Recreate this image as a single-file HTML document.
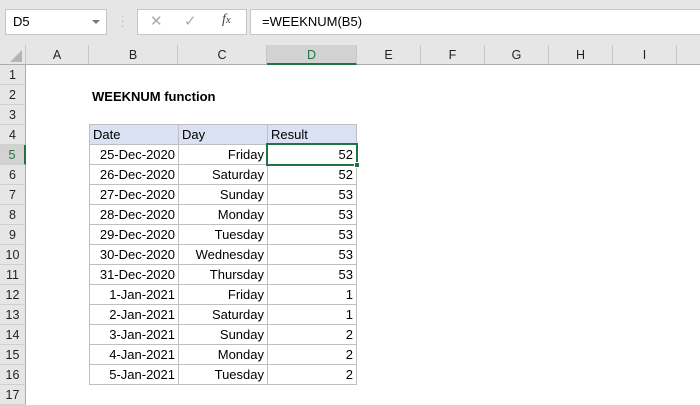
<!DOCTYPE html>
<html><head><style>
*{margin:0;padding:0;box-sizing:border-box}
body{width:700px;height:400px;overflow:hidden;background:#fff;font-family:"Liberation Sans",sans-serif;position:relative;color:#000}
.a{position:absolute}
.ch{position:absolute;top:45px;height:20px;background:#e6e6e6;border-right:1px solid #c8c8c8;border-bottom:1px solid #ababab;font-size:12.5px;text-align:center;line-height:20px;color:#222}
.rh{position:absolute;left:0;width:26px;height:20px;background:#e6e6e6;border-bottom:1px solid #d0d0d0;border-right:1px solid #ababab;font-size:12.5px;text-align:center;line-height:20px;color:#222}
.c{position:absolute;height:21px;border:1px solid #bfbfbf;font-size:13px;line-height:19px;padding:0 3px;white-space:nowrap}
.r{text-align:right}
</style></head><body>
<div class="a" style="left:0;top:0;width:700px;height:45px;background:#e6e6e6"></div>
<div class="a" style="left:5px;top:9px;width:102px;height:26px;background:#fff;border:1px solid #c6c6c6;font-size:13px;line-height:24px;padding-left:7px">D5</div>
<div class="a" style="left:92px;top:20px;width:0;height:0;border-left:4px solid transparent;border-right:4px solid transparent;border-top:4px solid #777"></div>
<div class="a" style="left:121px;top:14px;color:#aaa;font-size:10px;line-height:5px">·<br>·<br>·</div>
<div class="a" style="left:137px;top:9px;width:110px;height:26px;background:#fff;border:1px solid #c6c6c6"></div>
<div class="a" style="left:150px;top:12px;color:#aaa;font-size:15px">✕</div>
<div class="a" style="left:184px;top:12px;color:#aaa;font-size:15px">✓</div>
<div class="a" style="left:222px;top:12px;color:#444;font-size:14px;font-style:italic;font-family:'Liberation Serif',serif">f<span style="font-size:11px">x</span></div>
<div class="a" style="left:250px;top:9px;width:450px;height:26px;background:#fff;border:1px solid #c6c6c6;border-right:none;font-size:13px;line-height:24px;padding-left:11px">=WEEKNUM(B5)</div>

<div class="ch" style="left:0;width:26px"></div>
<div class="a" style="left:10px;top:50px;width:0;height:0;border-left:12px solid transparent;border-bottom:12px solid #b4b4b4"></div>
<div class="ch" style="left:26px;width:63px">A</div>
<div class="ch" style="left:89px;width:89px">B</div>
<div class="ch" style="left:178px;width:89px">C</div>
<div class="ch" style="left:267px;width:90px;background:#d2d2d2;border-bottom:2px solid #217346;color:#217346">D</div>
<div class="ch" style="left:357px;width:64px">E</div>
<div class="ch" style="left:421px;width:64px">F</div>
<div class="ch" style="left:485px;width:64px">G</div>
<div class="ch" style="left:549px;width:64px">H</div>
<div class="ch" style="left:613px;width:64px">I</div>
<div class="ch" style="left:677px;width:30px"></div>

<div class="rh" style="top:65px">1</div>
<div class="rh" style="top:85px">2</div>
<div class="rh" style="top:105px">3</div>
<div class="rh" style="top:125px">4</div>
<div class="rh" style="top:145px;background:#d2d2d2;border-right:2px solid #217346;color:#217346">5</div>
<div class="rh" style="top:165px">6</div>
<div class="rh" style="top:185px">7</div>
<div class="rh" style="top:205px">8</div>
<div class="rh" style="top:225px">9</div>
<div class="rh" style="top:245px">10</div>
<div class="rh" style="top:265px">11</div>
<div class="rh" style="top:285px">12</div>
<div class="rh" style="top:305px">13</div>
<div class="rh" style="top:325px">14</div>
<div class="rh" style="top:345px">15</div>
<div class="rh" style="top:365px">16</div>
<div class="rh" style="top:385px">17</div>

<div class="a" style="left:92px;top:87px;font-size:13px;font-weight:bold;line-height:20px">WEEKNUM function</div>

<div class="c" style="left:89px;top:124px;width:90px;background:#d9e1f2">Date</div>
<div class="c" style="left:178px;top:124px;width:90px;background:#d9e1f2">Day</div>
<div class="c" style="left:267px;top:124px;width:90px;background:#d9e1f2">Result</div>

<div id="rows"></div>
<script>
var d=[["25-Dec-2020","Friday",52],["26-Dec-2020","Saturday",52],["27-Dec-2020","Sunday",53],["28-Dec-2020","Monday",53],["29-Dec-2020","Tuesday",53],["30-Dec-2020","Wednesday",53],["31-Dec-2020","Thursday",53],["1-Jan-2021","Friday",1],["2-Jan-2021","Saturday",1],["3-Jan-2021","Sunday",2],["4-Jan-2021","Monday",2],["5-Jan-2021","Tuesday",2]];
var h="";d.forEach(function(r,i){var t=144+i*20;
h+='<div class="c r" style="left:89px;top:'+t+'px;width:90px">'+r[0]+'</div>';
h+='<div class="c r" style="left:178px;top:'+t+'px;width:90px">'+r[1]+'</div>';
h+='<div class="c r" style="left:267px;top:'+t+'px;width:90px">'+r[2]+'</div>';});
document.getElementById("rows").innerHTML=h;
</script>
<div class="a" style="left:266px;top:143px;width:92px;height:23px;border:2px solid #217346"></div>
<div class="a" style="left:354px;top:162px;width:6px;height:6px;background:#217346;border:1px solid #fff"></div>
</body></html>
